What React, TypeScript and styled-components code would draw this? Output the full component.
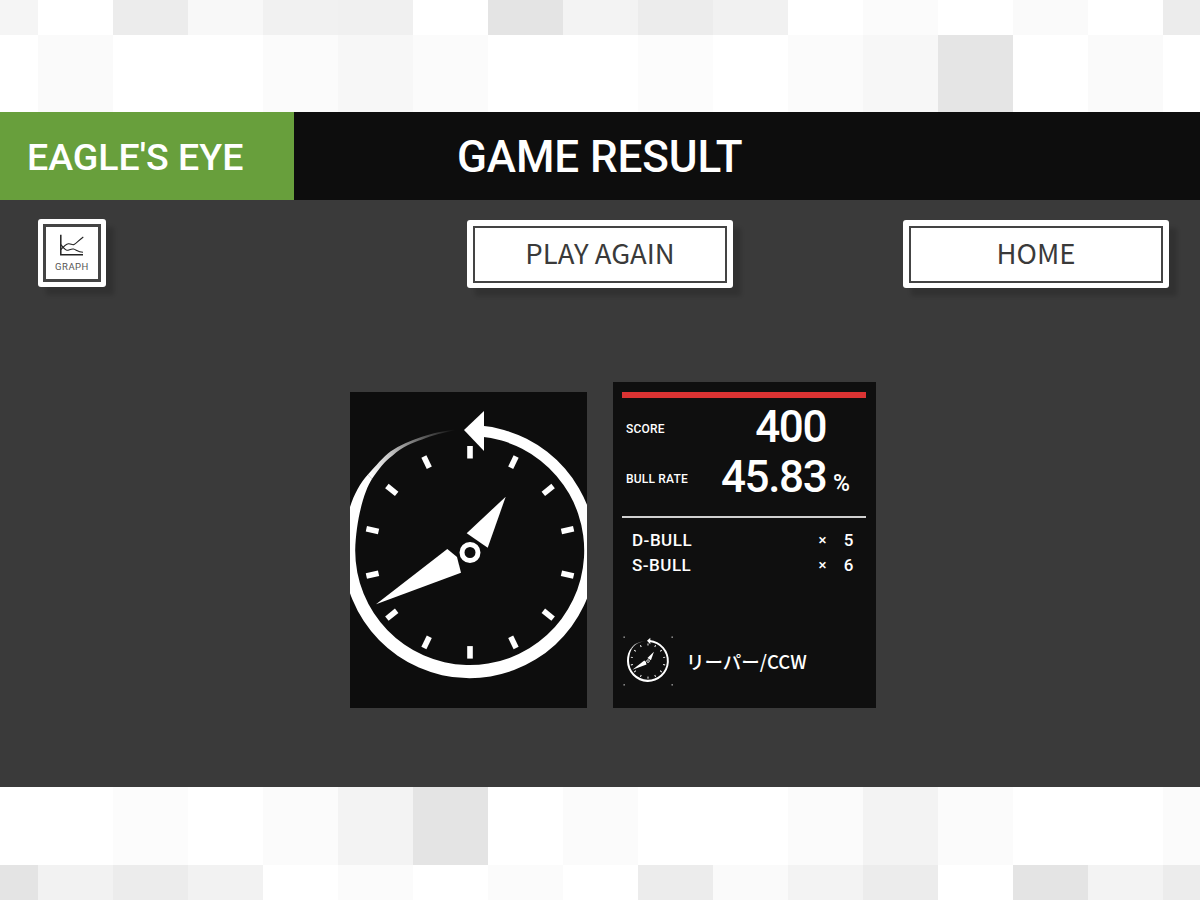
import React from 'react';
import styled, { createGlobalStyle } from 'styled-components';

const GlobalStyle = createGlobalStyle`
  html, body {
    margin: 0;
    padding: 0;
    background: #fff;
  }
  * {
    box-sizing: border-box;
  }
`;

const din = `Roboto, "Noto Sans CJK JP", sans-serif`;
const jp = `"Noto Sans CJK JP", "Noto Sans", sans-serif`;

const Page = styled.div`
  width: 1200px;
  height: 900px;
  display: flex;
  flex-direction: column;
  overflow: hidden;
`;

const TileBand = styled.div<{ $height: number }>`
  height: ${(p) => p.$height}px;
  display: flex;
  flex-direction: column;
  overflow: hidden;
  background: #fff;
`;

const TileRow = styled.div<{ $height: number }>`
  height: ${(p) => p.$height}px;
  display: flex;
  margin-left: -37px;
  flex: none;
`;

const Tile = styled.div<{ $shade: string }>`
  width: 75px;
  flex: none;
  background: #${(p) => p.$shade};
`;

const Header = styled.header`
  height: 88px;
  background: #0d0d0d;
  display: flex;
  align-items: center;
  flex: none;
`;

const ModeName = styled.div`
  width: 294px;
  height: 100%;
  background: #689f3c;
  color: #fff;
  font-family: ${din};
  font-weight: 500;
  font-size: 37.5px;
  padding: 2px 0 0 27px;
  display: flex;
  align-items: center;
`;

const Title = styled.h1`
  margin: 2px 0 0 163px;
  color: #fff;
  font-family: ${din};
  font-weight: 500;
  font-size: 44px;
  letter-spacing: -0.1px;
`;

const Main = styled.main`
  flex: 1;
  background: #3a3a3a;
  padding: 19px 0 0 38px;
`;

const Toolbar = styled.div`
  display: grid;
  grid-template-columns: 429px 266px 170px 266px;
  align-items: start;
`;

const FrameButton = styled.button<{ $column: number }>`
  grid-column: ${(p) => p.$column};
  width: 100%;
  height: 68px;
  margin-top: 1px;
  padding: 6px 6px 5px;
  border: none;
  border-radius: 3px;
  background: #fff;
  box-shadow: 8px 8px 4px rgba(0, 0, 0, 0.15);
  display: block;
`;

const GraphButton = styled(FrameButton)`
  width: 68px;
  margin-top: 0;
  padding: 5px;
`;

const ButtonInner = styled.span`
  width: 100%;
  height: 100%;
  border: 2.5px solid #444;
  color: #3a3a3a;
  font-family: ${jp};
  font-size: 27.5px;
  padding-bottom: 5px;
  display: flex;
  align-items: center;
  justify-content: center;
`;

const GraphInner = styled(ButtonInner)`
  flex-direction: column;
  border-width: 3px;
  color: #555;
  font-family: ${din};
  font-size: 9.5px;
  letter-spacing: 0.5px;
  line-height: 12px;
  gap: 3px;
  padding: 0;
`;

const Results = styled.section`
  margin-top: 94px;
  margin-left: 312px;
  display: flex;
  align-items: flex-end;
  gap: 26px;
`;

const ClockPanel = styled.div`
  width: 237px;
  height: 316px;
  background: #0d0d0d;
`;

const Card = styled.div`
  width: 263px;
  height: 326px;
  background: #0f0f0f;
  padding: 10px 10px 0 9px;
  color: #fff;
  font-family: ${din};
  display: flex;
  flex-direction: column;
`;

const RedBar = styled.div`
  height: 6px;
  background: #db3333;
`;

const StatRow = styled.div<{ $height: number }>`
  height: ${(p) => p.$height}px;
  display: flex;
  align-items: center;
  padding-left: 4px;
`;

const StatLabel = styled.span`
  width: 95px;
  margin-top: 3px;
  font-size: 12px;
  font-weight: 500;
  letter-spacing: 0.2px;
`;

const StatValue = styled.span`
  width: 105px;
  text-align: right;
  font-size: 44px;
  font-weight: 500;
  letter-spacing: -1.4px;
`;

const StatUnit = styled.span`
  margin: 12px 0 0 7px;
  font-size: 23px;
  font-weight: 500;
`;

const Divider = styled.div`
  height: 1.5px;
  margin-top: 18px;
  background: #d0d0d0;
`;

const BullList = styled.div`
  margin-top: 10px;
  padding: 0 12px 0 10px;
`;

const BullRow = styled.div`
  height: 25px;
  display: flex;
  align-items: center;
  font-size: 17px;
  font-weight: 500;
  letter-spacing: 0.5px;
`;

const BullName = styled.span`
  flex: 1;
`;

const BullTimes = styled.span`
  font-size: 15px;
`;

const BullCount = styled.span`
  width: 27px;
  text-align: right;
`;

const RuleRow = styled.div`
  margin-top: auto;
  margin-bottom: 22px;
  padding-left: 1px;
  display: flex;
  align-items: center;
  gap: 13px;
`;

const RuleName = styled.span`
  font-family: ${jp};
  font-size: 18.5px;
  font-weight: 500;
`;

const tickAngles = Array.from({ length: 14 }, (_, i) => (i * 360) / 14);

const ClockDrawing: React.FC<{ fadeId: string }> = ({ fadeId }) => (
  <g fill="#fff">
    <path d="M130 33.6 A126.5 126.5 0 1 1 -7 160 C-7 130 2 100 17.9 82.6 L22.1 86.8 C14 99 6 128 5.2 158.5 A114.5 114.5 0 1 0 130 44.5 Z" />
    <path
      d="M17.9 82.6 C26 73.6 33 65 40.4 59.4 C50 53 60 49 71.3 45 C82 41.5 95 38.8 105 37.6 L105 38.6 C95 40 82 43.5 72.1 47.6 C62 51 52 55 43 63.3 C35 69 28 78 22.1 86.8 Z"
      fill={`url(#${fadeId})`}
    />
    <polygon points="114,38 134,19 134,59" />
    {tickAngles.map((a) => (
      <rect key={a} x="117.2" y="54" width="5.6" height="12.5" transform={`rotate(${a} 120 160.3)`} />
    ))}
    <path d="M26 212.3 L97.3 157 L107 165 L111 180.7 Z" />
    <path d="M155.7 104.7 L116.7 141.3 L137.7 155.7 Z" />
    <circle cx="120" cy="160.5" r="8" fill="none" stroke="#fff" strokeWidth="5" />
    <defs>
      <linearGradient id={fadeId} gradientUnits="userSpaceOnUse" x1="20" y1="85" x2="105" y2="38">
        <stop offset="0" stopColor="#fff" />
        <stop offset="0.3" stopColor="#fff" stopOpacity="0.75" />
        <stop offset="0.66" stopColor="#fff" stopOpacity="0.35" />
        <stop offset="1" stopColor="#fff" stopOpacity="0" />
      </linearGradient>
    </defs>
  </g>
);

const GraphIcon = () => (
  <svg width="24" height="24" viewBox="0 1 24 24" fill="none" stroke="#222" strokeWidth="1.1">
    <path d="M0.8 1.7 V21.7 H23" strokeWidth="1.5" />
    <path d="M0.8 16.7 C3 14 6 11 8.5 10.7 S12 12.5 14 11.5 S19 7 23.3 4" />
    <path d="M0.8 11.7 C3 14 5 17.3 7 17.3 S11 15.5 13.5 16 S18 19.3 23 19.3" />
  </svg>
);

const topRows = [
  { height: 35, shades: ['f5f5f5', 'ffffff', 'ececec', 'f8f8f8', 'f1f1f1', 'f0f0f0', 'ffffff', 'e4e4e4', 'f3f3f3', 'ececec', 'f1f1f1', 'ffffff', 'fbfbfb', 'ffffff', 'fafafa', 'ffffff', 'ececec'] },
  { height: 77, shades: ['ffffff', 'fafafa', 'ffffff', 'ffffff', 'fbfbfb', 'f7f7f7', 'fbfbfb', 'ffffff', 'ffffff', 'fcfcfc', 'ffffff', 'fbfbfb', 'f7f7f7', 'e5e5e5', 'ffffff', 'fafafa', 'ffffff'] },
];

const bottomRows = [
  { height: 78, shades: ['ffffff', 'ffffff', 'fcfcfc', 'ffffff', 'fbfbfb', 'f3f3f3', 'e4e4e4', 'ffffff', 'fbfbfb', 'ffffff', 'ffffff', 'fbfbfb', 'f3f3f3', 'fbfbfb', 'ffffff', 'ffffff', 'fbfbfb'] },
  { height: 35, shades: ['e4e4e4', 'f2f2f2', 'ececec', 'f2f2f2', 'ffffff', 'fbfbfb', 'ffffff', 'fbfbfb', 'ffffff', 'ececec', 'fafafa', 'f3f3f3', 'ececec', 'ffffff', 'e4e4e4', 'f3f3f3', 'ececec'] },
];

const Tiles: React.FC<{ rows: { height: number; shades: string[] }[]; height: number }> = ({ rows, height }) => (
  <TileBand $height={height}>
    {rows.map((row, i) => (
      <TileRow key={i} $height={row.height}>
        {row.shades.map((shade, j) => (
          <Tile key={j} $shade={shade} />
        ))}
      </TileRow>
    ))}
  </TileBand>
);

const bulls = [
  { name: 'D-BULL', count: 5 },
  { name: 'S-BULL', count: 6 },
];

const App: React.FC = () => (
  <Page>
    <GlobalStyle />
    <Tiles rows={topRows} height={112} />
    <Header>
      <ModeName>EAGLE'S EYE</ModeName>
      <Title>GAME RESULT</Title>
    </Header>
    <Main>
      <Toolbar>
        <GraphButton $column={1}>
          <GraphInner>
            <GraphIcon />
            GRAPH
          </GraphInner>
        </GraphButton>
        <FrameButton $column={2}>
          <ButtonInner>PLAY AGAIN</ButtonInner>
        </FrameButton>
        <FrameButton $column={4}>
          <ButtonInner>HOME</ButtonInner>
        </FrameButton>
      </Toolbar>
      <Results>
        <ClockPanel>
          <svg width="237" height="316" viewBox="0 0 237 316">
            <ClockDrawing fadeId="fade-large" />
          </svg>
        </ClockPanel>
        <Card>
          <RedBar />
          <StatRow $height={58}>
            <StatLabel>SCORE</StatLabel>
            <StatValue>400</StatValue>
          </StatRow>
          <StatRow $height={42}>
            <StatLabel>BULL RATE</StatLabel>
            <StatValue>45.83</StatValue>
            <StatUnit>%</StatUnit>
          </StatRow>
          <Divider />
          <BullList>
            {bulls.map((b) => (
              <BullRow key={b.name}>
                <BullName>{b.name}</BullName>
                <BullTimes>×</BullTimes>
                <BullCount>{b.count}</BullCount>
              </BullRow>
            ))}
          </BullList>
          <RuleRow>
            <svg width="50" height="50" viewBox="-31 9 302 302">
              <ClockDrawing fadeId="fade-small" />
              <g fill="#fff" opacity="0.7">
                <rect x="-28" y="12" width="8" height="8" />
                <rect x="262" y="12" width="8" height="8" />
                <rect x="-28" y="300" width="8" height="8" />
                <rect x="262" y="300" width="8" height="8" />
              </g>
            </svg>
            <RuleName>リーパー/CCW</RuleName>
          </RuleRow>
        </Card>
      </Results>
    </Main>
    <Tiles rows={bottomRows} height={113} />
  </Page>
);

export default App;
